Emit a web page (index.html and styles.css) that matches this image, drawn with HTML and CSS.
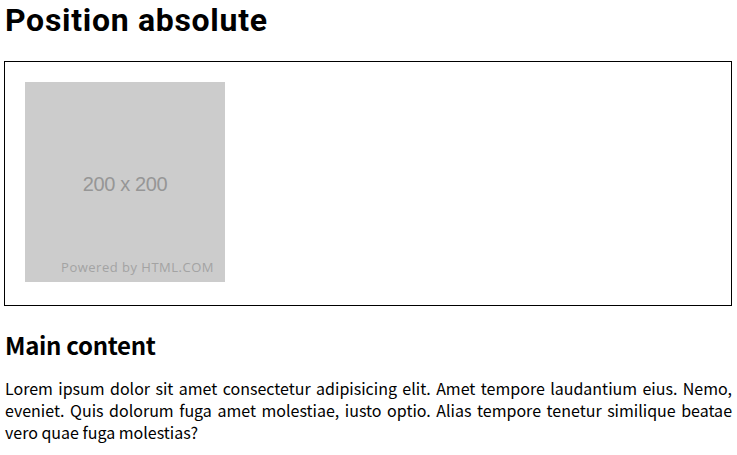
FILE: index.html
```
<!DOCTYPE html>
<html>
<head>
<meta charset="utf-8">
<link rel="stylesheet" href="styles.css">
</head>
<body>
<h1 class="title">Position absolute</h1>
<div class="frame">
  <div class="placeholder">
    <span class="size">200 x 200</span>
    <span class="powered">Powered by HTML.COM</span>
  </div>
</div>
<h2 class="subtitle">Main content</h2>
<p class="text">Lorem ipsum dolor sit amet consectetur adipisicing elit. Amet tempore laudantium eius. Nemo, eveniet. Quis dolorum fuga amet molestiae, iusto optio. Alias tempore tenetur similique beatae vero quae fuga molestias?</p>
</body>
</html>
```
FILE: styles.css
```
html, body {
  background: #fff;
}
body {
  margin: 0 5px 0 4px;
  font-family: "Noto Sans CJK KR", "Noto Sans", sans-serif;
  color: #000;
}
.title {
  margin: 0;
  font-family: Roboto, "Noto Sans", sans-serif;
  font-size: 32px;
  line-height: 38px;
  font-weight: 700;
  padding: 1px 0 0 1px;
  letter-spacing: 0.7px;
  white-space: nowrap;
}
.frame {
  margin-top: 22px;
  border: 1px solid #000;
  padding: 20px 20px 23px;
}
.placeholder {
  position: relative;
  width: 200px;
  height: 200px;
  background: #ccc;
}
.size {
  position: absolute;
  left: 0;
  right: 0;
  top: 91px;
  text-align: center;
  font-family: "Liberation Sans", Arial, sans-serif;
  font-size: 20px;
  letter-spacing: -0.4px;
  color: #969696;
  line-height: 22px;
}
.powered {
  position: absolute;
  right: 11px;
  bottom: 7px;
  font-family: "Open Sans", sans-serif;
  font-size: 13px;
  color: #a3a3a3;
  line-height: 16px;
  letter-spacing: 0.5px;
}
.subtitle {
  margin: 24px 0 0 1px;
  font-size: 24px;
  line-height: 30px;
  font-weight: 700;
  letter-spacing: -0.3px;
}
.text {
  margin: 17px 0 0 1px;
  font-size: 16px;
  line-height: 22px;
  text-align: justify;
}
```
